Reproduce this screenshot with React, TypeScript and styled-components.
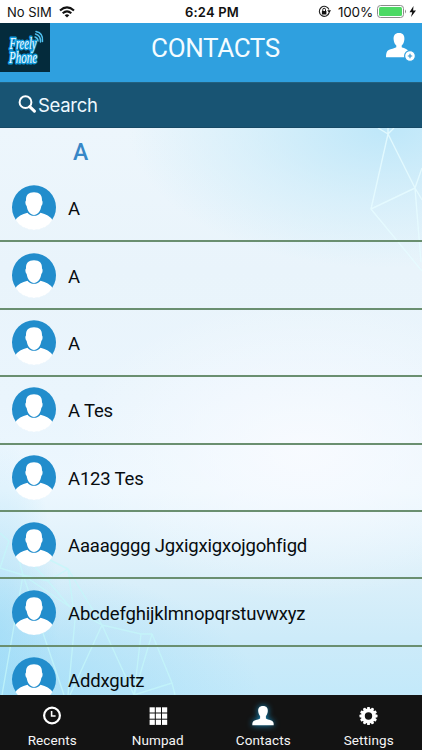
import React from "react";
import styled, { createGlobalStyle } from "styled-components";

const GlobalStyle = createGlobalStyle`
  * { box-sizing: border-box; }
  html, body, #root { height: 100%; }
  body { margin: 0; overflow: hidden; background: #fff; font-family: Roboto, "Noto Sans", sans-serif; }
`;

const Screen = styled.div`
  width: 422px;
  height: 750px;
  display: flex;
  flex-direction: column;
  overflow: hidden;
`;

const StatusBar = styled.div`
  height: 23px;
  flex: none;
  display: grid;
  grid-template-columns: 1fr auto 1fr;
  align-items: center;
  padding: 0 5px 0 7px;
  background: #fff;
  color: #111;
  font: 13px/22px Inter, sans-serif;
`;

const StatusGroup = styled.div<{ $end?: boolean }>`
  display: flex;
  align-items: center;
  justify-content: ${(p) => (p.$end ? "flex-end" : "flex-start")};
`;

const WifiIcon = styled.svg`
  margin-left: 7px;
`;

const Percent = styled.span`
  margin: 0 4px 0 7px;
  font-size: 13.5px;
  letter-spacing: -0.2px;
`;

const Clock = styled.div`
  font-weight: 600;
  letter-spacing: 0.2px;
`;

const Header = styled.header`
  height: 59px;
  flex: none;
  display: grid;
  grid-template-columns: 50px 1fr 50px;
  background: #2fa0df;
`;

const Title = styled.h1`
  margin: 0;
  padding-left: 9px;
  text-align: center;
  color: #f4fcff;
  font-weight: 400;
  font-size: 26px;
  letter-spacing: -0.35px;
  line-height: 51px;
`;

const Logo = styled.div`
  width: 50px;
  height: 49px;
  background: #042b3c;
`;

const LogoDrawing = styled.svg`
  display: block;
  overflow: visible;
`;

const LogoWord = styled.text`
  font: italic 16.5px "Liberation Serif", serif;
  fill: #f4fdff;
  stroke: #129bdd;
  stroke-width: 3px;
  stroke-linejoin: round;
  paint-order: stroke;
`;

const AddContact = styled.button`
  border: 0;
  padding: 9px 0 0 13px;
  background: none;
  display: flex;
  align-items: flex-start;
`;

const SearchBar = styled.div`
  height: 46px;
  flex: none;
  display: flex;
  align-items: center;
  padding: 0 0 2px 18px;
  background: #185473;
  border-top: 1px solid #23617f;
  border-bottom: 1px solid #174a66;
  color: #eef9ff;
  font: 18.5px/24px Inter, sans-serif;
`;

const SearchText = styled.span`
  margin-left: 2px;
  padding-top: 1px;
  letter-spacing: -0.3px;
`;

const ListArea = styled.main`
  position: relative;
  height: 567px;
  flex: none;
  overflow: hidden;
  background:
    radial-gradient(ellipse 260px 140px at 92% 0, rgba(190, 231, 249, 1), rgba(198, 234, 249, 0.5) 55%, rgba(208, 237, 250, 0)),
    radial-gradient(ellipse 60px 190px at 0 88%, rgba(150, 217, 247, 0.5), rgba(160, 220, 248, 0)),
    radial-gradient(ellipse 260px 130px at 0 100%, rgba(150, 217, 247, 0.7), rgba(160, 220, 248, 0)),
    radial-gradient(ellipse 240px 150px at 72% 57%, rgba(249, 251, 255, 0.9), rgba(249, 251, 255, 0)),
    linear-gradient(180deg, #edf6fc 0, #e9f4fb 25%, #eaf5fd 48%, #ecf7fe 64%, #dcf0fa 78%, #cdebf9 90%, #c3e9fa 100%);
`;

const Mesh = styled.svg`
  position: absolute;
  inset: 0;
`;

const Content = styled.div`
  position: relative;
`;

const SectionTitle = styled.h2`
  margin: 0;
  height: 47px;
  padding-left: 73px;
  color: #3787c7;
  font-weight: 500;
  font-size: 23px;
  line-height: 50px;
`;

const Row = styled.div`
  height: 67.4px;
  display: flex;
  align-items: center;
  gap: 12px;
  padding: 0 12px;
  border-bottom: 2px solid #6a8f70;
`;

const Name = styled.span`
  color: #080c0f;
  font-size: 18.5px;
  letter-spacing: -0.18px;
  line-height: 24px;
  padding-top: 3px;
  white-space: nowrap;
`;

const TabBar = styled.nav`
  flex: 1;
  display: grid;
  grid-template-columns: repeat(4, 1fr);
  background: #131313;
`;

const Tab = styled.div`
  display: flex;
  flex-direction: column;
  align-items: center;
  padding: 9px 1px 0 0;
  color: #f6f6f6;
  font-size: 13.5px;
  line-height: 16px;
  letter-spacing: 0.1px;
`;

const TabIcon = styled.svg<{ $glow?: boolean }>`
  display: block;
  overflow: visible;
  margin-bottom: 4px;
  filter: ${(p) => (p.$glow ? "drop-shadow(0 0 3px #168fc4)" : "none")};
`;

const BrandMark = () => (
  <Logo>
    <LogoDrawing width="50" height="49" viewBox="0 0 50 49">
      <LogoWord x="9.500" y="25.500" textLength="27" lengthAdjust="spacingAndGlyphs">Freely</LogoWord>
      <LogoWord x="9" y="40" textLength="28" lengthAdjust="spacingAndGlyphs">Phone</LogoWord>
      <g fill="none" stroke="#4fc1ef" strokeWidth="1.500" strokeLinecap="round">
        <path d="M35 14q3 1 3 4M35.500 11q5.500 1.500 5 8M36 8.500q7.500 1.500 6.500 10" />
      </g>
    </LogoDrawing>
  </Logo>
);

const Avatar = () => (
  <svg width="44" height="45" viewBox="0 0 44 45">
    <circle cx="22" cy="22.300" r="22" fill="#228dcc" />
    <path d="M3.500 35Q7 29.500 15.500 27.700C18 31.800 26 31.800 28.500 27.700Q37 29.500 40.500 35Q34 44.900 22 44.900T3.500 35Z" fill="#fff" />
    <path d="M22 7.300c5.600 0 8.200 2.700 8 8.200.6.700.7 1.500.5 2.900-.1 1.200-.7 1.800-1.100 2.400C28.500 26.600 25.500 30 22 30s-6.500-3.400-7.400-9.200c-.4-.600-1-1.200-1.100-2.400-.200-1.400-.1-2.200.5-2.900-.2-5.500 2.400-8.200 8-8.200Z" fill="#fff" />
  </svg>
);

const names = ["A", "A", "A", "A Tes", "A123 Tes", "Aaaagggg Jgxigxigxojgohfigd", "Abcdefghijklmnopqrstuvwxyz", "Addxgutz"];

const teeth = Array.from({ length: 12 }, (_, i) => i * 30);

export default function App() {
  return (
    <Screen>
      <GlobalStyle />
      <StatusBar>
        <StatusGroup>
          No SIM
          <WifiIcon width="16" height="12" viewBox="0 0 16 12">
            <g fill="none" stroke="#111" strokeWidth="2.100">
              <path d="M1 4.500Q8-1.800 15 4.500M3.700 7.300Q8 3.400 12.300 7.300" />
            </g>
            <path d="M5.700 9.200Q8 7.300 10.300 9.200L8 11.600Z" fill="#111" />
          </WifiIcon>
        </StatusGroup>
        <Clock>6:24 PM</Clock>
        <StatusGroup $end>
          <svg width="13" height="13" viewBox="0 0 13 13">
            <path d="M11.200 7.500A5 5 0 1 1 11 4.500" fill="none" stroke="#222" strokeWidth="1.100" />
            <path d="M9.200 5.200h3.800l-1.700 2.700zM3.900 6h4.500v3.400H3.900z" fill="#111" />
            <path d="M4.800 6V4.600a1.350 1.350 0 0 1 2.700 0V6" fill="none" stroke="#111" />
          </svg>
          <Percent>100%</Percent>
          <svg width="40" height="13" viewBox="0 0 40 13">
            <rect x=".5" y=".5" width="26" height="12" rx="3" fill="#fff" stroke="#8b8b8b" />
            <rect x="2" y="2" width="23" height="9" rx="1.500" fill="#4cd964" />
            <path d="M28 4.500q2 2 0 4z" fill="#8b8b8b" />
            <path d="M36.500 1L32.500 7.200h2.700L34 12l5-6.500h-2.900z" fill="#111" />
          </svg>
        </StatusGroup>
      </StatusBar>

      <Header>
        <BrandMark />
        <Title>CONTACTS</Title>
        <AddContact aria-label="Add contact">
          <svg width="32" height="30" viewBox="0 0 32 30">
            <path d="M14 1c4.200 0 5.600 2.600 5.400 6.200-.2 3-1.400 5.300-2.700 6.400v1.600c3.200 1.300 6 1.600 7 4.600L22 25.200H1c0-3.600.5-6.200 2.700-7.300 2.200-1 5.400-1.500 7.600-2.700v-1.600C10 12.500 8.800 10.200 8.600 7.200 8.400 3.600 9.800 1 14 1Z" fill="#fff" />
            <circle cx="25" cy="24" r="5.400" fill="#fff" stroke="#2fa0df" strokeWidth="1.200" />
            <path d="M25 21.800v4.400M22.800 24h4.400" stroke="#2f91cc" strokeWidth="1.100" />
          </svg>
        </AddContact>
      </Header>

      <SearchBar>
        <svg width="18" height="18" viewBox="0 0 18 18">
          <circle cx="7.500" cy="7.200" r="5.900" fill="none" stroke="#fff" strokeWidth="2" />
          <path d="M11.700 11.700l4.700 4.500" stroke="#fff" strokeWidth="3" strokeLinecap="round" />
        </svg>
        <SearchText>Search</SearchText>
      </SearchBar>

      <ListArea>
        <Mesh width="422" height="567" viewBox="0 128 422 567">
          <g fill="none" strokeWidth="1.400" strokeLinejoin="round">
            <path
              stroke="#e6fcff"
              strokeOpacity=".85"
              d="M378 128L388 134L394 128M388 128V134L371 209L422 271M388 134L415 188L371 209M415 188L422 168M415 188L422 200M415 188L421 262"
            />
            <path
              stroke="#c4f7f9"
              strokeOpacity=".75"
              d="M0 533L9 541L0 568L23 575L48 581L68 569L50 560M35 567L48 581L70 607L23 575L18 556M68 569L102 625L141 634H152L172 683L175 695M68 569L75 620L68 695M70 607L102 625L70 695M102 625L134 695L141 634M152 634L134 695L172 683M23 575L15 620L2 695M23 575L43 633L64 695"
            />
          </g>
        </Mesh>
        <Content>
          <SectionTitle>A</SectionTitle>
          {names.map((name, i) => (
            <Row key={i}>
              <Avatar />
              <Name>{name}</Name>
            </Row>
          ))}
        </Content>
      </ListArea>

      <TabBar>
        <Tab>
          <TabIcon width="24" height="24" viewBox="0 0 24 24">
            <circle cx="12" cy="11.500" r="7.900" fill="none" stroke="#fff" strokeWidth="2.200" />
            <path d="M11.600 7v5h4" fill="none" stroke="#fff" strokeWidth="1.600" />
          </TabIcon>
          Recents
        </Tab>
        <Tab>
          <TabIcon width="24" height="24" viewBox="0 0 24 24">
            {[0, 1, 2].flatMap((r) =>
              [0, 1, 2].map((c) => (
                <rect key={`${r}${c}`} x={3.6 + c * 6.2} y={3.3 + r * 6.2} width="5.200" height="5.200" fill="#fff" />
              ))
            )}
          </TabIcon>
          Numpad
        </Tab>
        <Tab>
          <TabIcon $glow width="24" height="24" viewBox="0 0 24 24">
            <path d="M12 2c3.600 0 5 2.200 4.800 5.200-.2 2-1 3.800-1.900 4.900v2.500c2.500 1.500 6.300 1.500 7.400 3.600.4.800.4 1.800.4 3H1.300c0-1.200 0-2.200.4-3 1.100-2.100 4.900-2.100 7.400-3.600v-2.500C8.200 11 7.400 9.200 7.200 7.200 7 4.200 8.400 2 12 2Z" fill="#fff" />
          </TabIcon>
          Contacts
        </Tab>
        <Tab>
          <TabIcon width="24" height="24" viewBox="0 0 24 24">
            <circle cx="11.500" cy="12" r="5.600" fill="none" stroke="#fff" strokeWidth="3.800" />
            {teeth.map((a) => (
              <rect key={a} x="10.100" y="3" width="2.800" height="3" rx=".6" fill="#fff" transform={`rotate(${a} 11.500 12)`} />
            ))}
          </TabIcon>
          Settings
        </Tab>
      </TabBar>
    </Screen>
  );
}
